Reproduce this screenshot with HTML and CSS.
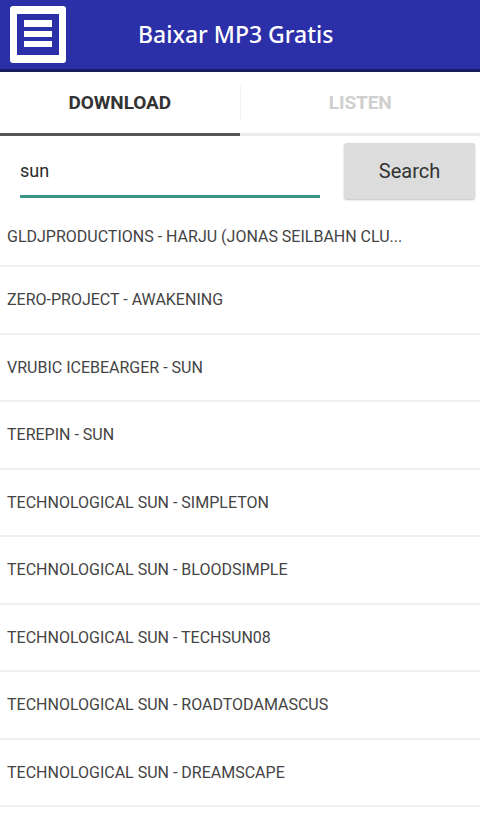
FILE: index.html
```html
<!DOCTYPE html>
<html>
<head>
<meta charset="utf-8">
<link rel="stylesheet" href="styles.css">
</head>
<body>
<div class="app">
  <header class="topbar">
    <div class="menu-icon">
      <svg width="56" height="57" viewBox="0 0 56 57">
        <rect x="0" y="0" width="56" height="57" rx="3" fill="#fff"/>
        <rect x="7" y="8" width="42" height="41" fill="#2b2fa8"/>
        <rect x="14" y="14" width="28" height="7" fill="#fff"/>
        <rect x="14" y="25" width="28" height="6" fill="#fff"/>
        <rect x="14" y="35" width="28" height="6" fill="#fff"/>
      </svg>
    </div>
    <h1 class="title">Baixar MP3 Gratis</h1>
  </header>
  <nav class="tabs">
    <div class="tab active">DOWNLOAD</div>
    <div class="tab-divider"></div>
    <div class="tab">LISTEN</div>
  </nav>
  <div class="search-row">
    <div class="input">sun</div>
    <button class="btn">Search</button>
  </div>
  <ul class="list">
    <li class="item first">GLDJPRODUCTIONS - HARJU (JONAS SEILBAHN CLU...</li>
    <li class="item">ZERO-PROJECT - AWAKENING</li>
    <li class="item">VRUBIC ICEBEARGER - SUN</li>
    <li class="item">TEREPIN - SUN</li>
    <li class="item">TECHNOLOGICAL SUN - SIMPLETON</li>
    <li class="item">TECHNOLOGICAL SUN - BLOODSIMPLE</li>
    <li class="item">TECHNOLOGICAL SUN - TECHSUN08</li>
    <li class="item">TECHNOLOGICAL SUN - ROADTODAMASCUS</li>
    <li class="item">TECHNOLOGICAL SUN - DREAMSCAPE</li>
  </ul>
</div>
</body>
</html>
```

FILE: styles.css
```css
* { box-sizing: border-box; }
html, body { margin: 0; padding: 0; background: #fff; }
body { font-family: Roboto, "Liberation Sans", sans-serif; width: 480px; height: 814px; overflow: hidden; }
.app { display: flex; flex-direction: column; }

.topbar {
  height: 72px;
  background: #2b2fa8;
  border-bottom: 3px solid #1a1d5c;
  display: flex;
  align-items: flex-start;
  padding: 6px 0 0 10px;
}
.menu-icon { width: 56px; height: 57px; display: flex; }
.title {
  margin: 0 0 0 72px;
  font-family: "Noto Sans", "Open Sans", sans-serif;
  font-weight: 500;
  font-size: 23px;
  line-height: 56px;
  color: #fff;
  letter-spacing: 0;
}

.tabs {
  height: 64px;
  display: flex;
  align-items: center;
  border-bottom: 3px solid #ebebeb;
}
.tab {
  flex: 1;
  text-align: center;
  font-size: 19px;
  font-weight: 700;
  color: #cfcfcf;
  height: 61px;
  line-height: 61px;
  letter-spacing: -0.1px;
}
.tab.active {
  color: #333;
  border-bottom: 3px solid #555;
  margin-bottom: -3px;
  height: 64px;
}
.tab-divider { width: 1px; height: 34px; background: #f1f1f1; }

.search-row {
  height: 69px;
  display: flex;
  align-items: flex-start;
  padding: 7px 5px 0 20px;
}
.input {
  width: 300px;
  height: 55px;
  font-size: 18px;
  color: #2a2a2a;
  line-height: 56px;
  border-bottom: 3px solid #3a9585;
}
.btn {
  margin-left: 24px;
  width: 131px;
  height: 56px;
  background: #dcdcdc;
  border: none;
  border-radius: 3px;
  box-shadow: 0 1px 2px rgba(0,0,0,0.25);
  font-family: Roboto, "Liberation Sans", sans-serif;
  font-size: 20px;
  color: #333;
}

.list { list-style: none; margin: 0; padding: 0; }
.item {
  height: 67.5px;
  display: flex;
  align-items: center;
  padding-left: 7px;
  font-size: 16px;
  color: #444;
  border-bottom: 2px solid #efefef;
  letter-spacing: 0;
}
.item.first { height: 62px; padding-top: 2px; }
```
